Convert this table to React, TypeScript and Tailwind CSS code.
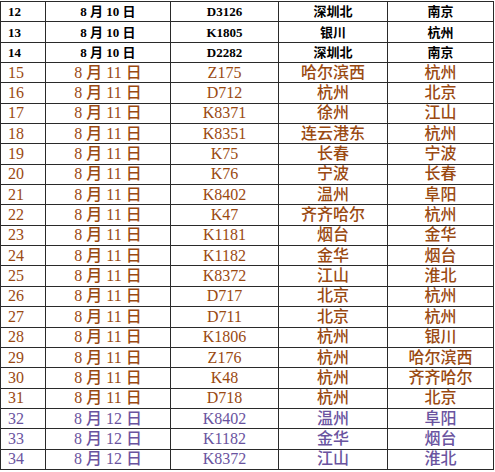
import React from "react";

type Row = [string, string, string, string, string, "k" | "b" | "p"];

const rows: Row[] = [
  ["12", "10", "D3126", "深圳北", "南京", "k"],
  ["13", "10", "K1805", "银川", "杭州", "k"],
  ["14", "10", "D2282", "深圳北", "南京", "k"],
  ["15", "11", "Z175", "哈尔滨西", "杭州", "b"],
  ["16", "11", "D712", "杭州", "北京", "b"],
  ["17", "11", "K8371", "徐州", "江山", "b"],
  ["18", "11", "K8351", "连云港东", "杭州", "b"],
  ["19", "11", "K75", "长春", "宁波", "b"],
  ["20", "11", "K76", "宁波", "长春", "b"],
  ["21", "11", "K8402", "温州", "阜阳", "b"],
  ["22", "11", "K47", "齐齐哈尔", "杭州", "b"],
  ["23", "11", "K1181", "烟台", "金华", "b"],
  ["24", "11", "K1182", "金华", "烟台", "b"],
  ["25", "11", "K8372", "江山", "淮北", "b"],
  ["26", "11", "D717", "北京", "杭州", "b"],
  ["27", "11", "D711", "北京", "杭州", "b"],
  ["28", "11", "K1806", "杭州", "银川", "b"],
  ["29", "11", "Z176", "杭州", "哈尔滨西", "b"],
  ["30", "11", "K48", "杭州", "齐齐哈尔", "b"],
  ["31", "11", "D718", "杭州", "北京", "b"],
  ["32", "12", "K8402", "温州", "阜阳", "p"],
  ["33", "12", "K1182", "金华", "烟台", "p"],
  ["34", "12", "K8372", "江山", "淮北", "p"],
];

const font = { fontFamily: '"Liberation Serif", "Noto Sans CJK SC", serif' };

export default function App() {
  return (
    <div className="w-[495px] h-[472px] bg-white overflow-hidden pt-px">
      <table className="table-fixed border-collapse w-[493px]" style={font}>
        <colgroup>
          <col className="w-[45px]" />
          <col className="w-[125px]" />
          <col className="w-[108px]" />
          <col className="w-[109px]" />
          <col className="w-[106px]" />
        </colgroup>
        <tbody>
          {rows.map((r) => {
            const cls =
              r[5] === "k"
                ? "text-[13px] font-bold text-black"
                : r[5] === "b"
                ? "text-[16px] font-medium text-[#9a4a12]"
                : "text-[16px] font-medium text-[#6a54a0]";
            return (
              <tr key={r[0]} className={`h-[20.35px] leading-none ${cls}`}>
                <td className="border border-[#2a2a2a] pl-[7px] text-left p-0">{r[0]}</td>
                <td className="border border-[#2a2a2a] text-center p-0 whitespace-pre">
                  {`8 月 ${r[1]} 日`}
                </td>
                <td className="border border-[#2a2a2a] text-center p-0">{r[2]}</td>
                <td className="border border-[#2a2a2a] text-center p-0">{r[3]}</td>
                <td className="border border-[#2a2a2a] text-center p-0">{r[4]}</td>
              </tr>
            );
          })}
        </tbody>
      </table>
    </div>
  );
}
